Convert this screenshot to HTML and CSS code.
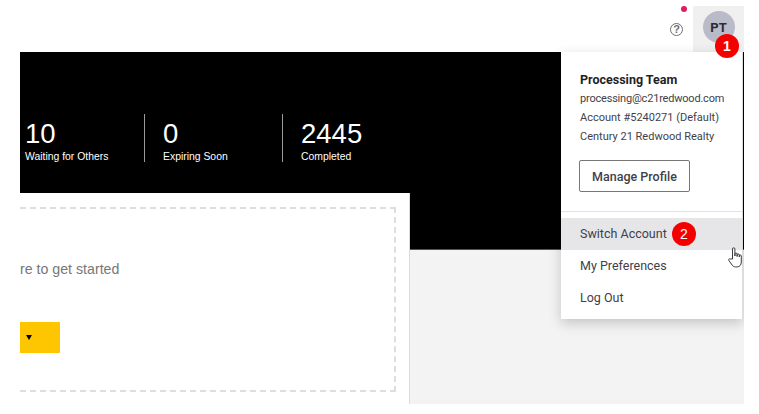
FILE: index.html
```html
<!DOCTYPE html>
<html lang="en">
<head>
    <meta charset="UTF-8">
    <title>Account Menu</title>
    <link rel="stylesheet" href="styles.css">
</head>
<body>
    <div class="app">
        <header class="topbar">
            <span class="notify-dot"></span>
            <span class="help-icon">?</span>
            <div class="avatar-cell">
                <div class="avatar">PT</div>
                <span class="step-badge step-one">1</span>
            </div>
        </header>

        <section class="hero">
            <div class="stat">
                <div class="stat-num">10</div>
                <div class="stat-label">Waiting for Others</div>
            </div>
            <div class="stat">
                <div class="stat-num">0</div>
                <div class="stat-label">Expiring Soon</div>
            </div>
            <div class="stat">
                <div class="stat-num">2445</div>
                <div class="stat-label">Completed</div>
            </div>
        </section>

        <main class="content">
            <div class="card">
                <div class="dropzone">
                    <p class="drop-text">re to get started</p>
                    <button class="start-btn"><span class="caret"></span></button>
                </div>
            </div>
        </main>

        <div class="account-menu">
            <div class="profile">
                <div class="profile-name">Processing Team</div>
                <div class="profile-line profile-email">processing@c21redwood.com</div>
                <div class="profile-line">Account #5240271 (Default)</div>
                <div class="profile-line">Century 21 Redwood Realty</div>
                <button class="manage-btn">Manage Profile</button>
            </div>
            <ul class="menu-list">
                <li class="menu-item active">Switch Account <span class="step-badge step-two">2</span></li>
                <li class="menu-item">My Preferences</li>
                <li class="menu-item">Log Out</li>
            </ul>
            <svg class="hand-cursor" width="15" height="21" viewBox="0 0 15 21" fill="#fff" stroke="#3a3a3a" stroke-width="1" stroke-linejoin="round">
                <path d="M4.5 12V2a1.2 1.2 0 0 1 2.4 0V9V7.1a1.1 1.1 0 0 1 2.2 0V9.5V8a1.1 1.1 0 0 1 2.2 0V10V9a1 1 0 0 1 2 0V15c0 2.8-1.6 4.9-4 4.9H7.5c-1.6 0-2.5-.7-3.4-1.9L.8 13.4c-.7-.9.5-2.2 1.5-1.4z"></path>
            </svg>
        </div>
    </div>
</body>
</html>
```

FILE: styles.css
```css
:root {
    --text-dark: #3f3f4a;
    --hover-bg: #e6e6e8;
    --page-bg: #f3f3f3;
    --line-color: #dcdcdc;
    --badge-red: #f50000;
}

html, body {
    margin: 0;
    padding: 0;
    height: 100%;
    background-color: #fff;
    overflow: hidden;
}

body {
    font-family: 'Roboto', 'Inter', sans-serif;
    color: var(--text-dark);
}

.app {
    position: relative;
    display: flex;
    flex-direction: column;
    width: 724px;
    height: 404px;
    margin-left: 20px;
    overflow: hidden;
}

/* Top bar */
.topbar {
    position: relative;
    display: flex;
    justify-content: flex-end;
    align-items: center;
    height: 46px;
    padding-top: 6px;
    flex-shrink: 0;
}

.notify-dot {
    position: absolute;
    top: 6px;
    left: 661px;
    width: 6px;
    height: 6px;
    border-radius: 50%;
    background-color: #e01e5a;
}

.help-icon {
    display: flex;
    align-items: center;
    justify-content: center;
    width: 11px;
    height: 11px;
    margin-right: 10px;
    border: 1.5px solid #6e6e6e;
    border-radius: 50%;
    color: #6e6e6e;
    font-family: 'Liberation Sans', sans-serif;
    font-size: 11px;
    font-weight: 700;
}

.avatar-cell {
    display: flex;
    justify-content: center;
    padding-top: 5px;
    box-sizing: border-box;
    width: 51px;
    height: 46px;
    background-color: #f0f0f0;
}

.avatar {
    display: flex;
    align-items: center;
    justify-content: center;
    width: 32px;
    height: 32px;
    border-radius: 50%;
    background-color: #babbc9;
    color: #2b2b33;
    font-size: 13px;
    font-weight: 700;
}

.step-badge {
    position: absolute;
    display: flex;
    align-items: center;
    justify-content: center;
    width: 24px;
    height: 24px;
    border-radius: 50%;
    background-color: var(--badge-red);
    color: #fff;
    font-family: 'Liberation Sans', sans-serif;
    font-size: 14px;
    z-index: 3;
}

.step-one {
    top: 34px;
    left: 695px;
    font-weight: 700;
}

.step-two {
    top: 4px;
    left: 111px;
}

/* Black stats band */
.hero {
    display: flex;
    height: 198px;
    flex-shrink: 0;
    box-sizing: border-box;
    padding: 62px 0 0 5px;
    background-color: #000;
    border-bottom: 1px solid #555;
    color: #fff;
    font-family: 'Liberation Sans', sans-serif;
}

.stat {
    box-sizing: border-box;
    width: 138px;
    height: 48px;
    padding-left: 18px;
    border-left: 1px solid #999;
}

.stat:first-child {
    width: 119px;
    padding-left: 0;
    border-left: none;
}

.stat-num {
    font-size: 27.5px;
    line-height: 30px;
    margin-top: 5px;
}

.stat-label {
    font-size: 10.4px;
    line-height: 14px;
    margin-top: 1px;
}

/* Upload card */
.content {
    flex: 1;
    background-color: var(--page-bg);
}

.card {
    box-sizing: border-box;
    width: 390px;
    height: 211px;
    margin-top: -57px;
    padding: 14px 13px 12px 0;
    background-color: #fff;
    border-right: 1px solid var(--line-color);
}

.dropzone {
    box-sizing: border-box;
    height: 185px;
    margin-left: -20px;
    padding-top: 51px;
    border: 2px dashed #dedede;
}

.drop-text {
    margin: 0;
    padding-left: 18px;
    color: #777;
    font-family: 'Liberation Sans', sans-serif;
    font-size: 14.2px;
    line-height: 18px;
    white-space: nowrap;
}

.start-btn {
    display: flex;
    align-items: center;
    justify-content: flex-end;
    width: 58px;
    height: 31px;
    margin-top: 44px;
    padding: 0 28px 0 0;
    background-color: #fdc600;
    border: none;
    border-radius: 1px;
}

.caret {
    width: 0;
    height: 0;
    border-left: 3.5px solid transparent;
    border-right: 3.5px solid transparent;
    border-top: 5px solid #000;
}

/* Account dropdown */
.account-menu {
    position: absolute;
    top: 52px;
    left: 541px;
    box-sizing: border-box;
    width: 182px;
    height: 267px;
    background-color: #fff;
    border-right: 1px solid var(--line-color);
    box-shadow: 0 4px 12px rgba(0, 0, 0, 0.2);
    z-index: 2;
}

.profile {
    height: 160px;
    box-sizing: border-box;
    padding: 18px 19px 0;
    border-bottom: 1px solid #e2e2e2;
    font-size: 11px;
    line-height: 19px;
}

.profile-name {
    color: #1f1f27;
    font-size: 12.5px;
    font-weight: 700;
}

.profile-line {
    white-space: nowrap;
}

.profile-email {
    letter-spacing: -0.2px;
}

.manage-btn {
    display: block;
    width: 111px;
    height: 32px;
    margin: 14px 0 0 -1px;
    padding: 0;
    background-color: #fff;
    border: 1.5px solid #777;
    border-radius: 2px;
    color: var(--text-dark);
    font-family: inherit;
    font-size: 12.5px;
    font-weight: 500;
}

.menu-list {
    list-style: none;
    margin: 6px 0 0;
    padding: 0;
}

.menu-item {
    position: relative;
    height: 32px;
    padding-left: 19px;
    font-size: 12.5px;
    line-height: 32px;
}

.menu-item.active {
    background-color: var(--hover-bg);
}

.hand-cursor {
    position: absolute;
    top: 195px;
    left: 167px;
    z-index: 4;
}
```
